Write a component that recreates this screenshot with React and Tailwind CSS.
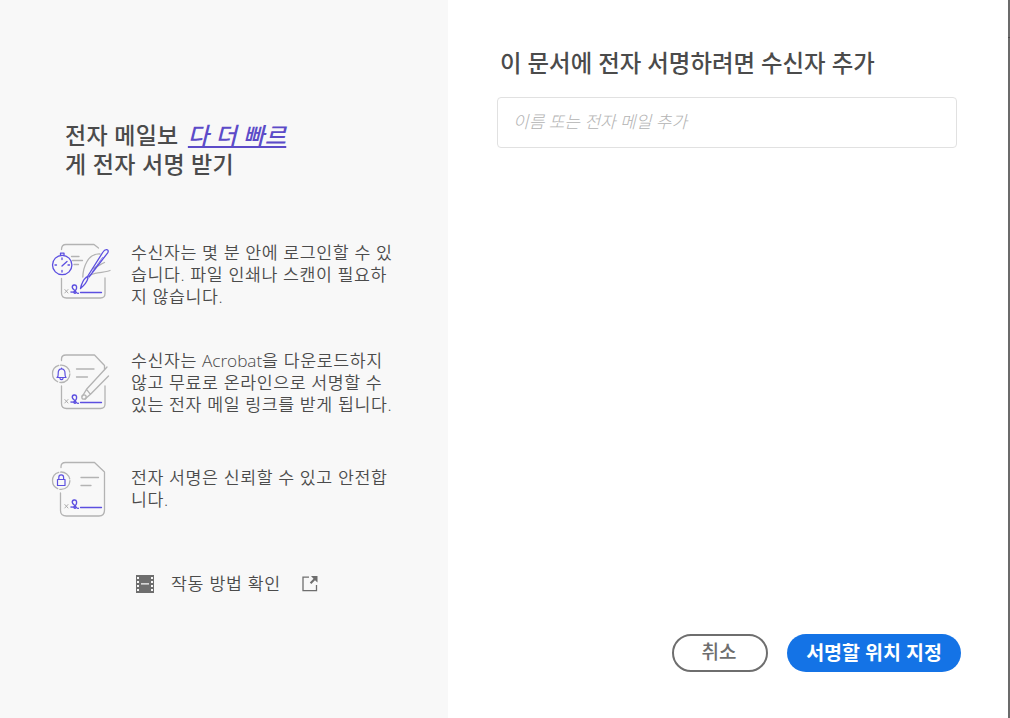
import React from 'react';

const Signature = () => (
  <>
    <path d="M19.800 54.500l3.200 3.500M23 54.500L19.800 58" stroke="#a5a5a5" strokeWidth="0.9" />
    <path
      d="M26 57c3.600.6 6-2.400 5.600-5.200-.5-2.800-4.600-2.200-4.300.6.200 2.200 3 2.800 3.600 4.600.4 1.400-2.200 1.700-1.900.3.300-1.200 2-.6 2.700.3.500.6 1 .9 1.700.7"
      stroke="#5c4fe0"
      strokeWidth="1.4"
    />
    <path d="M35.500 57.500h21" stroke="#5c4fe0" strokeWidth="1.3" />
  </>
);

const QuickSignIcon = () => (
  <svg width="75" height="70" viewBox="0 0 75 70" fill="none" strokeLinecap="round" strokeLinejoin="round">
    <g stroke="#b3b3b3" strokeWidth="1.3">
      <path d="M16.500 14.500c0-3 1.500-5 4.500-5h28l4.500 3.500" />
      <path d="M16.500 43.500v14.500q0 5 5 5h34q4.500 0 4.500-4.500v-15.500" />
      <path d="M26.500 21.500h7.500M27.500 25.500h10M29 29.500h4.500" />
      <path d="M55 19c-5-.3-10 2.500-13 7.500-2.800 4.800-4 9.500-4.200 15.500" />
      <path d="M42 42.500c2.500-2 5-3.800 9-4.300 5-.7 9.500-1.200 14-2.700M47.500 33.500c3-1 7-3.500 12-6" />
    </g>
    <g stroke="#5c4fe0" strokeWidth="1.3">
      <circle cx="17.200" cy="30" r="9.700" />
      <path d="M15.500 20v-1.800h3.500v1.800M17 31l5-4.500M17 23v1.500M17 35.500v1.500M10 30h1.500M23 30h1.500" />
      <path d="M35.500 53.500c1-5 2.500-8.500 6-11.500l1.500 1.200c-1 4-3.500 7-7.500 10.300z" />
      <path d="M42.500 41.500L58 17c1-1.700 2.200-2.500 3.700-2.400 1.600.2 1.900 1.500 1 3.200L44 42" />
      <path d="M47.500 36.500l10-14" strokeWidth="0.7" />
    </g>
    <Signature />
  </svg>
);

const EmailLinkIcon = () => (
  <svg width="75" height="70" viewBox="0 0 75 70" fill="none" strokeLinecap="round" strokeLinejoin="round">
    <g stroke="#b3b3b3" strokeWidth="1.3">
      <path d="M16.500 15.500v-1.500q0-4 4.500-4h28.500l10 10.500v4" />
      <path d="M16.500 41v17.500q0 5 5 5h34q4.500 0 4.500-4.500v-18" />
      <circle cx="16.200" cy="28.800" r="8.700" strokeDasharray="15 2.200 21 1.800 12.500 2.200" />
      <path d="M31.500 24h17.500M31.500 32h11" />
      <path d="M62 22L41.500 44.300M63.500 31L45.500 49.300M41.500 44.300l4 5M41.500 44.300l-4 6.700M45.500 49.300l-5.500 4.700" />
      <circle cx="39" cy="52" r="2.200" />
    </g>
    <path
      d="M12 32.500c1.500-1 1.200-3 1.200-4.500 0-5.500 6.800-5.500 6.800 0 0 1.500-.2 3.500 1 4.500zM15 33.500c.5 1.500 2.500 1.500 3 0M16.600 23.700v-.5"
      stroke="#5c4fe0"
      strokeWidth="1.2"
    />
    <Signature />
  </svg>
);

const SecureIcon = () => (
  <svg width="75" height="70" viewBox="0 0 75 70" fill="none" strokeLinecap="round" strokeLinejoin="round">
    <g stroke="#b3b3b3" strokeWidth="1.3">
      <path d="M16 12.500v-1q0-4 4.500-4H49.500L59.500 17v38q0 6-5.500 6H21.500q-6 0-6-5.500V38" />
      <circle cx="16.200" cy="25.700" r="8.700" strokeDasharray="15 2.200 21 1.800 12.500 2.200" />
      <path d="M36 22.500h17.500M36 30.500h10" />
    </g>
    <path
      d="M12.500 24.500h7.500v6h-7.500zM13.800 24.500v-2c0-3.500 4.800-3.500 4.800 0v2"
      stroke="#5c4fe0"
      strokeWidth="1.2"
    />
    <g transform="translate(0 -5)">
      <Signature />
    </g>
  </svg>
);

const FilmIcon = () => (
  <svg width="18" height="18" viewBox="0 0 18 18">
    <path d="M0 0h18v18H0z" fill="#6e6e6e" />
    <path
      d="M1 2h2v2H1zM1 6h2v2H1zM1 10h2v2H1zM1 14h2v2H1zM15 2h2v2h-2zM15 6h2v2h-2zM15 10h2v2h-2zM15 14h2v2h-2zM5 8.200h8v1.300H5z"
      fill="#f8f8f8"
    />
  </svg>
);

const LinkOutIcon = () => (
  <svg width="16" height="16" viewBox="0 0 16 16" fill="none">
    <path d="M7 1.200H1v13.500h13.500V9" stroke="#6e6e6e" strokeWidth="1.3" />
    <path d="M9 0h6.500v6.500L13 4.200 9.300 8 7.800 6.500l3.700-3.800z" fill="#6e6e6e" />
  </svg>
);

const benefits = [
  {
    id: 'quick',
    Icon: QuickSignIcon,
    lines: ['수신자는 몇 분 안에 로그인할 수 있', '습니다. 파일 인쇄나 스캔이 필요하', '지 않습니다.'],
    textClass: 'pt-[7px]'
  },
  {
    id: 'email',
    Icon: EmailLinkIcon,
    lines: [
      <>
        수신자는 <span className="tracking-[-0.1px]">Acrobat</span>을 다운로드하지
      </>,
      '않고 무료로 온라인으로 서명할 수',
      '있는 전자 메일 링크를 받게 됩니다.'
    ],
    textClass: 'pt-[5px]'
  },
  {
    id: 'secure',
    Icon: SecureIcon,
    lines: ['전자 서명은 신뢰할 수 있고 안전합', '니다.'],
    textClass: 'pt-[12px]'
  }
];

const App = () => {
  return (
    <div className="flex h-[718px] w-[1010px] overflow-hidden bg-white font-['Open_Sans','Noto_Sans_CJK_KR',sans-serif] whitespace-nowrap text-[#4b4b4b]">
      {/* Benefits */}
      <aside className="w-[448px] shrink-0 bg-[#f8f8f8] pt-[121px]">
        <h2 className="h-[114px] pl-[65px] text-[23px] leading-[29px] font-medium tracking-[0.3px]">
          전자 메일보{' '}
          <em className="ml-[3px] text-[#5c4bc8] underline decoration-2 underline-offset-[2px] [text-decoration-skip-ink:none]">
            다 더 빠르
          </em>
          <br />
          게 전자 서명 받기
        </h2>

        <ul>
          {benefits.map(({ id, Icon, lines, textClass }) => (
            <li key={id} className="flex h-[110px] pl-[45px]">
              <Icon />
              <p className={`ml-[11px] text-[17.3px] leading-[22px] font-[350] tracking-[0.6px] ${textClass}`}>
                {lines.map((line, index) => (
                  <span key={index} className="block">{line}</span>
                ))}
              </p>
            </li>
          ))}
        </ul>

        <a className="mt-[7px] flex h-6 items-center pl-[136px] text-[17.3px] font-[350] tracking-[0.7px]">
          <FilmIcon />
          <span className="mr-[21px] ml-[17px]">작동 방법 확인</span>
          <LinkOutIcon />
        </a>
      </aside>

      {/* Recipients */}
      <main className="flex flex-1 flex-col pr-[47px] pl-[49px]">
        <h1 className="mt-[47px] pl-[3px] text-[23.4px] leading-[32px] font-medium">
          이 문서에 전자 서명하려면 수신자 추가
        </h1>
        <input
          className="mt-[18px] mr-[4px] h-[51px] rounded-[4px] border border-[#e1e1e1] px-[15px] pb-0.5 text-[17px] font-light italic outline-none placeholder:text-[#b3b3b3]"
          placeholder="이름 또는 전자 메일 추가"
        />
        <div className="mt-auto mb-[46px] flex justify-end gap-[19px]">
          <button className="h-[38px] w-[96px] rounded-full border-2 border-[#6e6e6e] px-0 pr-0.5 pb-0.5 text-[19px] leading-none font-medium text-[#6e6e6e]">
            취소
          </button>
          <button className="h-[38px] w-[174px] rounded-full bg-[#1473e6] text-[19.5px] leading-none font-bold text-white">
            서명할 위치 지정
          </button>
        </div>
      </main>

      <div className="w-[2px] shrink-0 bg-[#6b6b6b] pt-[37px]">
        <div className="h-px bg-[#4b4b4b]" />
      </div>
    </div>
  );
};

export default App;
